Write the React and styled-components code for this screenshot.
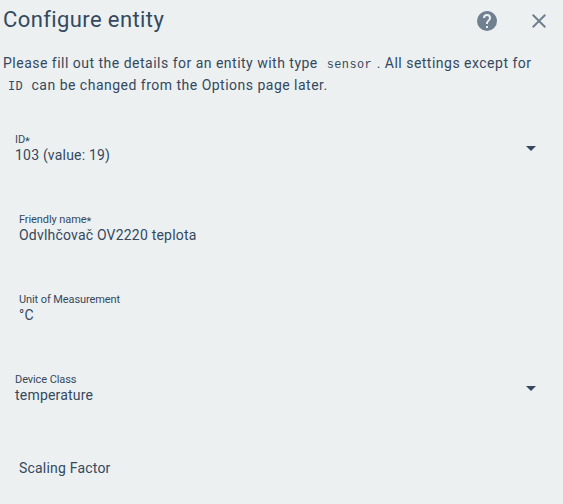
import React from "react";
import styled, { createGlobalStyle } from "styled-components";

const GlobalStyle = createGlobalStyle`
  body { margin: 0; background: #ecf0f1; overflow: hidden; }
  * { box-sizing: border-box; }
`;

const Dialog = styled.main`
  height: 504px;
  background: #ecf0f1;
  color: #34495e;
  font-family: Roboto, sans-serif;
  overflow: hidden;
`;

const Header = styled.header`
  display: flex;
  align-items: center;
  height: 40px;
  padding: 0 12px 0 3px;
`;

const Title = styled.h1`
  flex: 1;
  margin: 0;
  font-size: 22px;
  font-weight: 400;
  line-height: 38px;
  letter-spacing: 0.4px;
`;

const IconButton = styled.button`
  display: flex;
  padding: 0;
  margin: 2px 0 0 28px;
  border: 0;
  background: none;
  color: #708090;
  svg { width: 24px; height: 24px; fill: currentColor; }
`;

const Description = styled.p`
  margin: 12px 0 0;
  padding-left: 3px;
  font-size: 14px;
  line-height: 22px;
  letter-spacing: 0.49px;
  white-space: nowrap;
`;

const Code = styled.code`
  padding: 0 4.5px 0 4.9px;
  font-family: "Liberation Mono", monospace;
  font-size: 11.9px;
  line-height: 1;
  letter-spacing: 0.45px;
`;

const Form = styled.form`
  margin-top: 37px;
`;

const Field = styled.div`
  display: flex;
  height: 80px;
  padding-left: ${(p) => (p.$select ? 15 : 19)}px;
  padding-right: 20px;
`;

const FieldText = styled.div`
  flex: 1;
`;

const Label = styled.label`
  display: block;
  height: 12px;
  font-size: 11px;
  line-height: 14px;
  letter-spacing: -0.09px;
`;

const Asterisk = styled.span`
  position: relative;
  top: 2px;
`;

const Value = styled.div`
  font-size: 14px;
  line-height: 20px;
  letter-spacing: 0.2px;
`;

const Arrow = styled.svg`
  width: 24px;
  height: 24px;
  margin-top: 3px;
  fill: #34495e;
`;

const EmptyField = styled(Field)`
  padding-top: 5px;
`;

const fields = [
  { label: "ID", required: true, value: "103 (value: 19)", select: true },
  { label: "Friendly name", required: true, value: "Odvlhčovač OV2220 teplota" },
  { label: "Unit of Measurement", value: "°C" },
  { label: "Device Class", value: "temperature", select: true },
];

export default function App() {
  return (
    <Dialog>
      <GlobalStyle />
      <Header>
        <Title>Configure entity</Title>
        <IconButton aria-label="Help">
          <svg viewBox="0 0 24 24"><path d="M15.07 11.25 14.17 12.17C13.45 12.89 13 13.5 13 15H11V14.5C11 13.39 11.45 12.39 12.17 11.67L13.41 10.41C13.78 10.05 14 9.55 14 9 14 7.89 13.1 7 12 7A2 2 0 0 0 10 9H8A4 4 0 0 1 12 5 4 4 0 0 1 16 9C16 9.88 15.64 10.67 15.07 11.25M13 19H11V17H13M12 2A10 10 0 0 0 2 12 10 10 0 0 0 12 22 10 10 0 0 0 22 12C22 6.47 17.5 2 12 2Z" /></svg>
        </IconButton>
        <IconButton aria-label="Close">
          <svg viewBox="0 0 24 24"><path d="M19 6.41 17.59 5 12 10.59 6.41 5 5 6.41 10.59 12 5 17.59 6.41 19 12 13.41 17.59 19 19 17.59 13.41 12Z" /></svg>
        </IconButton>
      </Header>
      <Description>
        Please fill out the details for an entity with type <Code>sensor</Code>. All settings except for<br />
        <Code>ID</Code> can be changed from the Options page later.
      </Description>
      <Form>
        {fields.map(({ label, value, select, required }) => (
          <Field key={label} $select={select}>
            <FieldText>
              <Label>{label}{required && <Asterisk>*</Asterisk>}</Label>
              <Value>{value}</Value>
            </FieldText>
            {select && <Arrow viewBox="0 0 24 24"><path d="m7 10 5 5 5-5Z" /></Arrow>}
          </Field>
        ))}
        <EmptyField><Value>Scaling Factor</Value></EmptyField>
      </Form>
    </Dialog>
  );
}
